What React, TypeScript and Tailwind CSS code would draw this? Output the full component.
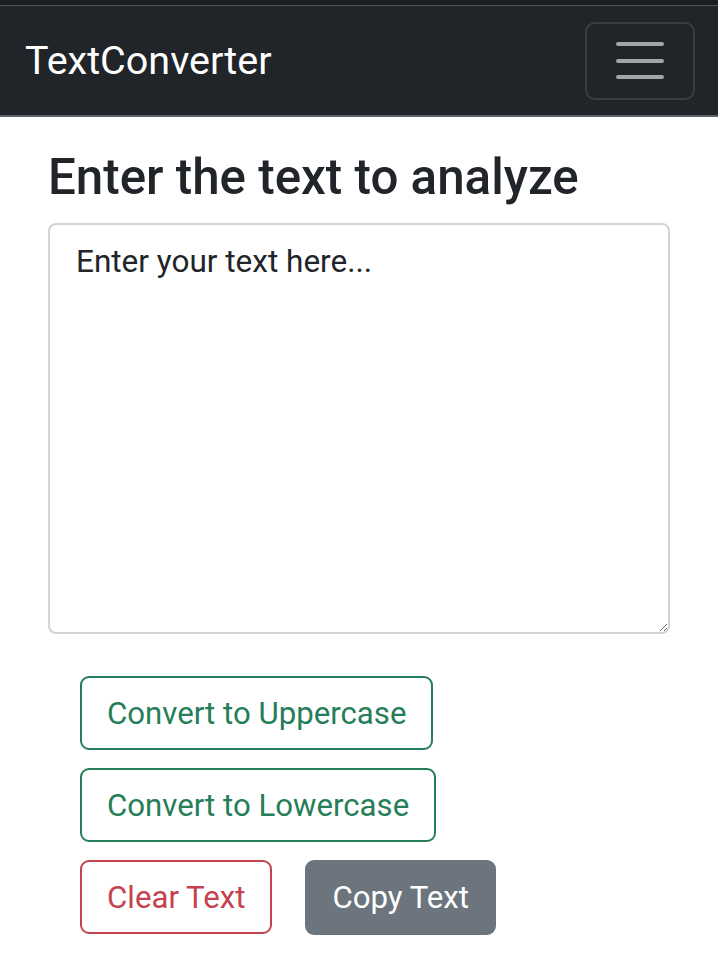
import React, { useState } from "react";

export default function App() {
   const [text, setText] = useState("");

   const btn =
      "rounded-[9px] border-2 px-[25px] h-[74px] text-[31.2px] leading-[45px] bg-white";

   return (
      <div className="min-h-[976px] bg-white font-['Roboto',sans-serif] text-[#212529]">
         <div className="h-[6px] bg-[#1c1d1e] border-b border-[#55585b]" />
         <nav className="h-[111px] bg-[#212529] border-b-2 border-[#5f6265] flex items-center justify-between pl-[25px] pr-[23px]">
            <span className="text-[39.5px] text-white leading-none pt-[1px]">TextConverter</span>
            <button className="w-[110px] h-[78px] rounded-[10px] border-2 border-[#3a3e43] flex flex-col items-center justify-center gap-[12.5px]">
               <span className="block w-[48px] h-[4px] rounded-full bg-[#a3a5a8]" />
               <span className="block w-[48px] h-[4px] rounded-full bg-[#a3a5a8]" />
               <span className="block w-[48px] h-[4px] rounded-full bg-[#a3a5a8]" />
            </button>
         </nav>

         <main className="px-[48px] pt-[31px]">
            <h1 className="text-[49.3px] font-medium leading-[1.2] mb-[16px]">
               Enter the text to analyze
            </h1>
            <textarea
               value={text}
               onChange={(e) => setText(e.target.value)}
               placeholder="Enter your text here..."
               className="block w-full h-[411px] rounded-[8px] border-2 border-[#d3d4d6] px-[26px] py-[14px] text-[31.5px] leading-[45px] placeholder:text-[#212529] outline-none"
            />

            <div className="flex flex-col items-start gap-[18px] mt-[42px] ml-[32px]">
               <button className={`${btn} border-[#267e59] text-[#267e59]`}>
                  Convert to Uppercase
               </button>
               <button className={`${btn} border-[#267e59] text-[#267e59]`}>
                  Convert to Lowercase
               </button>
               <div className="flex gap-[33px]">
                  <button className={`${btn} border-[#c4434f] text-[#c4434f]`}>
                     Clear Text
                  </button>
                  <button className="rounded-[9px] px-[27px] h-[75px] text-[31.2px] leading-[45px] bg-[#6c757d] text-white">
                     Copy Text
                  </button>
               </div>
            </div>
         </main>
      </div>
   );
}
